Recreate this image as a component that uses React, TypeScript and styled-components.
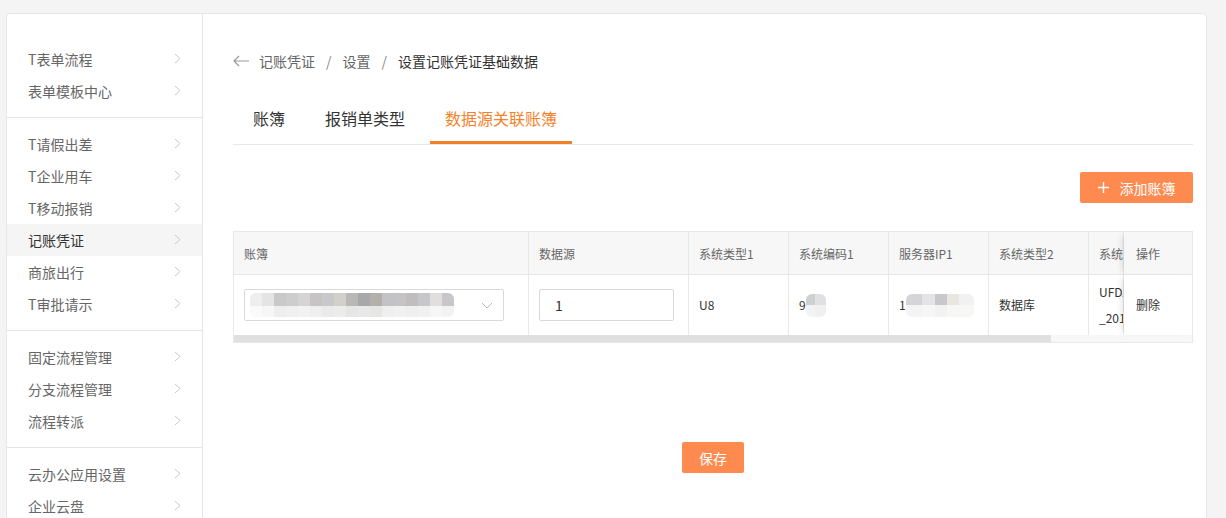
import React from 'react'
import styled, { createGlobalStyle } from 'styled-components'

const orange = '#ff8a4f'
const tabOrange = '#f5822a'
const line = '#e8e8e8'

const GlobalStyle = createGlobalStyle`
  html, body {
    margin: 0;
    padding: 0;
    background: #f4f4f4;
  }
  body {
    font-family: "Microsoft YaHei", "Noto Sans CJK SC", "Noto Sans", sans-serif;
    color: #333;
    overflow: hidden;
  }
  * { box-sizing: border-box; }
`

const Page = styled.div`
  padding: 13px 0 0 6px;
  height: 518px;
  overflow: hidden;
`

const Card = styled.div`
  display: flex;
  width: 1201px;
  height: 540px;
  background: #fff;
  border: 1px solid #e6e6e6;
  border-radius: 4px;
`

/* ---------- sidebar ---------- */

const Sidebar = styled.nav`
  width: 196px;
  flex-shrink: 0;
  padding-top: 19px;
  border-right: 1px solid #e5e5e5;
`

const Group = styled.div`
  padding: 10px 0;

  & + & {
    border-top: 1px solid #e5e5e5;
  }
`

const Item = styled.div<{ $active?: boolean }>`
  height: 32px;
  padding: 0 21px 1px;
  display: flex;
  align-items: center;
  justify-content: space-between;
  font-size: 14px;
  line-height: 20px;
  color: ${p => (p.$active ? '#333' : '#666')};
  background: ${p => (p.$active ? '#f5f5f5' : 'transparent')};
  cursor: pointer;
`

const Chevron = () => (
  <svg width="7" height="11" viewBox="0 0 7 11">
    <polyline points="1,1 6,5.5 1,10" fill="none" stroke="#c8c8c8" strokeWidth="1" />
  </svg>
)

const menu: string[][] = [
  ['T表单流程', '表单模板中心'],
  ['T请假出差', 'T企业用车', 'T移动报销', '记账凭证', '商旅出行', 'T审批请示'],
  ['固定流程管理', '分支流程管理', '流程转派'],
  ['云办公应用设置', '企业云盘'],
]

/* ---------- main ---------- */

const Main = styled.main`
  flex: 1;
  min-width: 0;
  padding: 37px 13px 0 30px;
  display: flex;
  flex-direction: column;
`

const Breadcrumb = styled.div`
  display: flex;
  align-items: center;
  height: 20px;
  font-size: 14px;
  line-height: 20px;
`

const Back = styled.svg`
  margin-right: 10px;
`

const Crumb = styled.span<{ $current?: boolean }>`
  color: ${p => (p.$current ? '#333' : '#666')};
`

const Sep = styled.span`
  color: #888;
  margin: 0 11px;
`

const Tabs = styled.div`
  margin-top: 29px;
  display: flex;
  gap: 10px;
  padding-left: 5px;
  border-bottom: 1px solid ${line};
`

const Tab = styled.div<{ $active?: boolean }>`
  height: 44px;
  padding: 7px 15px 0;
  font-size: 16px;
  line-height: 22px;
  color: ${p => (p.$active ? tabOrange : '#333')};
  border-bottom: 3px solid ${p => (p.$active ? '#f07f26' : 'transparent')};
  cursor: pointer;
`

const Toolbar = styled.div`
  margin-top: 27px;
  display: flex;
  justify-content: flex-end;
`

const OrangeButton = styled.button`
  height: 31px;
  border: none;
  border-radius: 2px;
  background: ${orange};
  color: #fff;
  font-family: inherit;
  font-size: 14px;
  line-height: 20px;
  display: flex;
  align-items: center;
  justify-content: center;
  gap: 11px;
  cursor: pointer;
`

const AddButton = styled(OrangeButton)`
  width: 113px;
`

const SaveButton = styled(OrangeButton)`
  width: 62px;
  margin: 99px auto 0;
`

/* ---------- table ---------- */

const TableWrap = styled.div`
  margin-top: 28px;
  border: 1px solid ${line};
  overflow: hidden;
`

const Table = styled.table`
  width: 100%;
  table-layout: fixed;
  border-collapse: separate;
  border-spacing: 0;
`

const fixedCell = `
  position: relative;
  padding-left: 12px;
  border-right: none;
  box-shadow: -5px 0 6px -3px rgba(0, 0, 0, 0.12);
`

const Th = styled.th<{ $fixed?: boolean }>`
  height: 43px;
  padding: 0 10px;
  text-align: left;
  font-weight: normal;
  font-size: 12px;
  color: #666;
  background: #f7f7f7;
  border-bottom: 1px solid ${line};
  border-right: 1px solid ${line};
  white-space: nowrap;
  overflow: hidden;
  ${p => p.$fixed && fixedCell}
`

const Td = styled.td<{ $fixed?: boolean }>`
  height: 60px;
  padding: 0 10px;
  font-size: 12px;
  line-height: 26px;
  color: #333;
  background: #fff;
  border-right: 1px solid ${line};
  overflow: hidden;
  white-space: nowrap;
  ${p => p.$fixed && fixedCell}
`

const ScrollTrack = styled.div`
  height: 7px;
  background: #f7f7f7;
`

const ScrollThumb = styled.div`
  height: 100%;
  background: #e0e0e0;
`

const Select = styled.div`
  width: 260px;
  height: 32px;
  border: 1px solid #d9d9d9;
  border-radius: 2px;
  display: flex;
  align-items: center;
  justify-content: space-between;
  padding: 0 10px 0 5px;
  background: #fff;
`

const Input = styled.input`
  width: 135px;
  height: 32px;
  border: 1px solid #d9d9d9;
  border-radius: 2px;
  padding: 0 15px;
  font-family: inherit;
  font-size: 14px;
  color: #333;
  outline: none;
`

const Masked = styled.span`
  display: inline-flex;
  align-items: center;
`

const Smudge = styled.span`
  display: inline-block;
  border-radius: 6px;
  filter: blur(0.7px);
  background-repeat: no-repeat;
`

const NameSmudge = styled(Smudge)`
  width: 204px;
  height: 24px;
  background-image:
    linear-gradient(to right,
      #eeeeee 0 12px, #e4e4e4 12px 24px, #c9c9c9 24px 36px, #cdcdcd 36px 48px,
      #d4d4d2 48px 60px, #c7c4c5 60px 72px, #c9c9cc 72px 84px, #d1d1ca 84px 96px,
      #b8b9b7 96px 108px, #a8a8aa 108px 120px, #b3b0a9 120px 132px, #c3c3c6 132px 144px,
      #c4c4c6 144px 156px, #bfbdbe 156px 168px, #c7c6c8 168px 180px, #e0dfdd 180px 192px,
      #c6c6cb 192px 204px),
    linear-gradient(to right,
      #fafafa 0 12px, #f6f6f6 12px 24px, #eeeeee 24px 36px, #f0f0f0 36px 48px,
      #f2f2f2 48px 60px, #efeff0 60px 72px, #eaeaea 72px 84px, #ececec 84px 96px,
      #e6e6e6 96px 108px, #e8e8e8 108px 120px, #e6e6e4 120px 132px, #efefef 132px 144px,
      #f1f1f1 144px 156px, #efefef 156px 168px, #f1f1f1 168px 180px, #f6f6f6 180px 192px,
      #f3f3f3 192px 204px);
  background-size: 100% 13px, 100% 11px;
  background-position: 0 0, 0 13px;
`

const CodeSmudge = styled(Smudge)`
  width: 20px;
  height: 23px;
  background-image:
    linear-gradient(to right, #cfcfd0 0 9px, #e0e0e2 9px 20px),
    linear-gradient(to right, #f3f3f3 0 9px, #f0f0f0 9px 20px);
  background-size: 100% 11px, 100% 12px;
  background-position: 0 0, 0 11px;
`

const IpSmudge = styled(Smudge)`
  width: 68px;
  height: 23px;
  background-image:
    linear-gradient(to right, #d5d5d7 0 16px, #e4e4e4 16px 29px, #c8c8ca 29px 41px, #e9e6e0 41px 53px, #f1f1f1 53px 68px),
    linear-gradient(to right, #f4f4f4 0 16px, #f6f6f6 16px 29px, #f2f2f2 29px 41px, #f7f7f5 41px 68px);
  background-size: 100% 11px, 100% 12px;
  background-position: 0 0, 0 11px;
`

// visible part of a horizontally scrolled table; the last data column is cut by the fixed one
const columns: { title: string; width: number }[] = [
  { title: '账簿', width: 295 },
  { title: '数据源', width: 160 },
  { title: '系统类型1', width: 100 },
  { title: '系统编码1', width: 100 },
  { title: '服务器IP1', width: 100 },
  { title: '系统类型2', width: 100 },
  { title: '系统编码2', width: 35 },
]

const visibleRatio = 0.853

export default function App() {
  return (
    <>
      <GlobalStyle />
      <Page>
        <Card>
          <Sidebar>
            {menu.map((group, gi) => (
              <Group key={gi}>
                {group.map(name => (
                  <Item key={name} $active={name === '记账凭证'}>
                    <span>{name}</span>
                    <Chevron />
                  </Item>
                ))}
              </Group>
            ))}
          </Sidebar>

          <Main>
            <Breadcrumb>
              <Back width="16" height="12" viewBox="0 0 16 12">
                <path d="M6 1 L1 6 L6 11 M1 6 H16" fill="none" stroke="#999" strokeWidth="1.2" />
              </Back>
              <Crumb>记账凭证</Crumb>
              <Sep>/</Sep>
              <Crumb>设置</Crumb>
              <Sep>/</Sep>
              <Crumb $current>设置记账凭证基础数据</Crumb>
            </Breadcrumb>

            <Tabs>
              <Tab>账簿</Tab>
              <Tab>报销单类型</Tab>
              <Tab $active>数据源关联账簿</Tab>
            </Tabs>

            <Toolbar>
              <AddButton>
                <svg width="11" height="11" viewBox="0 0 11 11">
                  <path d="M5.5 0 V11 M0 5.5 H11" stroke="#fff" strokeWidth="1.4" />
                </svg>
                添加账簿
              </AddButton>
            </Toolbar>

            <TableWrap>
              <Table>
                <colgroup>
                  {columns.map(c => (
                    <col key={c.title} width={c.width} />
                  ))}
                  <col width={70} />
                </colgroup>
                <thead>
                  <tr>
                    {columns.map(c => (
                      <Th key={c.title}>{c.title}</Th>
                    ))}
                    <Th $fixed>操作</Th>
                  </tr>
                </thead>
                <tbody>
                  <tr>
                    <Td>
                      <Select>
                        <NameSmudge />
                        <svg width="12" height="7" viewBox="0 0 12 7">
                          <polyline points="1,1 6,6 11,1" fill="none" stroke="#bbb" strokeWidth="1" />
                        </svg>
                      </Select>
                    </Td>
                    <Td>
                      <Input readOnly value="1" />
                    </Td>
                    <Td>U8</Td>
                    <Td>
                      <Masked>
                        9<CodeSmudge />
                      </Masked>
                    </Td>
                    <Td>
                      <Masked>
                        1<IpSmudge />
                      </Masked>
                    </Td>
                    <Td>数据库</Td>
                    <Td>
                      UFDATA
                      <br />
                      _2018
                    </Td>
                    <Td $fixed>删除</Td>
                  </tr>
                </tbody>
              </Table>
              <ScrollTrack>
                <ScrollThumb style={{ width: `${visibleRatio * 100}%` }} />
              </ScrollTrack>
            </TableWrap>

            <SaveButton>保存</SaveButton>
          </Main>
        </Card>
      </Page>
    </>
  )
}
